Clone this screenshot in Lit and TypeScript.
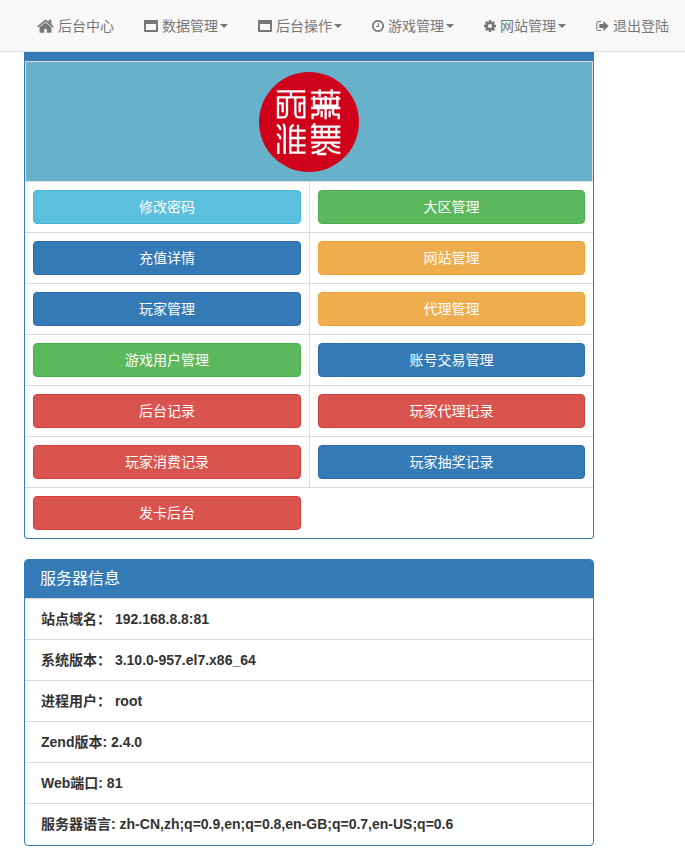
import { LitElement, html, css, svg } from "lit";
import { customElement } from "lit/decorators.js";

const icons: Record<string, { box: string; width: number; height: number; path: string }> = {
  home: {
    box: "64 96 1664 1536", width: 17, height: 16,
    path: "M1472 992v480q0 26-19 45t-45 19h-384v-384h-256v384h-384q-26 0-45-19t-19-45v-480q0-1 .5-3t.5-3l575-474 575 474q1 2 1 6zm223-69l-62 74q-8 9-21 11h-3q-13 0-21-7l-692-577-692 577q-12 8-24 7-13-2-21-11l-62-74q-8-10-7-23.5t11-21.5l719-599q32-26 76-26t76 26l244 204v-195q0-14 9-23t23-9h192q14 0 23 9t9 23v408l219 182q10 8 11 21.5t-7 23.5z",
  },
  window: {
    box: "0 0 14 14", width: 14, height: 14,
    path: "M1 1H13Q14 1 14 2V12Q14 13 13 13H1Q0 13 0 12V2Q0 1 1 1ZM2 5V11H12V5Z",
  },
  clock: {
    box: "128 0 1536 1792", width: 12, height: 14,
    path: "M1024 544v448q0 14-9 23t-23 9h-320q-14 0-23-9t-9-23v-64q0-14 9-23t23-9h224v-352q0-14 9-23t23-9h64q14 0 23 9t9 23zm416 352q0-148-73-273t-198-198-273-73-273 73-198 198-73 273 73 273 198 198 273 73 273-73 198-198 73-273zm224 0q0 209-103 385.5t-279.5 279.5-385.5 103-385.5-103-279.5-279.5-103-385.5 103-385.5 279.5-279.5 385.5-103 385.5 103 279.5 279.5 103 385.5z",
  },
  gear: {
    box: "128 0 1536 1792", width: 12, height: 14,
    path: "M1152 896q0-106-75-181t-181-75-181 75-75 181 75 181 181 75 181-75 75-181zm512-109v222q0 12-8 23t-20 13l-185 28q-19 54-39 91 35 50 107 138 10 12 10 25t-9 23q-27 37-99 108t-94 71q-12 0-26-9l-138-108q-44 23-91 38-16 136-29 186-7 28-36 28h-222q-14 0-24.5-8.5t-11.5-21.5l-28-184q-49-16-90-37l-141 107q-10 9-25 9-14 0-25-11-126-114-165-168-7-10-7-23 0-12 8-23 15-21 51-66.5t54-70.5q-27-50-41-99l-183-27q-13-2-21-12.5t-8-23.5v-222q0-12 8-23t19-13l186-28q14-46 39-92-40-57-107-138-10-12-10-24 0-10 9-23 26-36 98.5-107.5t94.5-71.5q13 0 26 10l138 107q44-23 91-38 16-136 29-186 7-28 36-28h222q14 0 24.5 8.5t11.5 21.5l28 184q49 16 90 37l142-107q9-9 24-9 13 0 25 10 129 119 165 170 7 8 7 22 0 12-8 23-15 21-51 66.5t-54 70.5q26 50 41 98l183 28q13 2 21 12.5t8 23.5z",
  },
  exit: {
    box: "64 0 1600 1792", width: 13, height: 14,
    path: "M704 1440q0 4 1 20t.5 26.5-3 23.5-10 19.5-20.5 6.5h-320q-119 0-203.5-84.5t-84.5-203.5v-704q0-119 84.5-203.5t203.5-84.5h320q13 0 22.5 9.5t9.5 22.5q0 4 1 20t.5 26.5-3 23.5-10 19.5-20.5 6.5h-320q-66 0-113 47t-47 113v704q0 66 47 113t113 47h312l11.5 1 11.5 3 8 5.5 7 9 2 13.5zm928-544q0 26-19 45l-544 544q-19 19-45 19t-45-19-19-45v-288h-448q-26 0-45-19t-19-45v-384q0-26 19-45t45-19h448v-288q0-26 19-45t45-19 45 19l544 544q19 19 19 45z",
  },
};

const menu = [
  { icon: "home", label: "后台中心", caret: false },
  { icon: "window", label: "数据管理", caret: true },
  { icon: "window", label: "后台操作", caret: true },
  { icon: "clock", label: "游戏管理", caret: true },
  { icon: "gear", label: "网站管理", caret: true },
  { icon: "exit", label: "退出登陆", caret: false },
];

const actions = [
  ["修改密码", "info"], ["大区管理", "success"],
  ["充值详情", "primary"], ["网站管理", "warning"],
  ["玩家管理", "primary"], ["代理管理", "warning"],
  ["游戏用户管理", "success"], ["账号交易管理", "primary"],
  ["后台记录", "danger"], ["玩家代理记录", "danger"],
  ["玩家消费记录", "danger"], ["玩家抽奖记录", "primary"],
  ["发卡后台", "danger"],
];

const server = [
  "站点域名： 192.168.8.8:81",
  "系统版本： 3.10.0-957.el7.x86_64",
  "进程用户： root",
  "Zend版本: 2.4.0",
  "Web端口: 81",
  "服务器语言: zh-CN,zh;q=0.9,en;q=0.8,en-GB;q=0.7,en-US;q=0.6",
];

// Seal emblem: four carved blocks on a red disc
const seal = svg`
  <circle cx="150" cy="150" r="150" fill="#d0021b"/>
  <g fill="none" stroke="#fff" stroke-width="7">
    <path d="M54 58H139M96 58V76M57 93V76H136V93M84 76V122Q84 136 72 136H57V94H71V121M109 76V122Q109 136 121 136H136V94H122V121"/>
    <path d="M156 62H244M182 52V74M218 52V74M156 80H244M165 72V101H235V72M186 80V101M214 80V101M200 72V142M156 108H244M178 108V122Q178 128 168 128H161V142M222 108V122Q222 128 232 128H239V142M188 116V136M212 116V136"/>
    <path d="M54 158Q64 164 64 174M54 186Q64 190 64 202M58 246V212M77 246V168Q77 160 72 156M94 246V172Q94 164 104 158M94 176H140M94 198H140M94 220H140M94 242H140M117 158V242"/>
    <path d="M166 154Q166 164 156 166M162 164H244M156 180H244M156 196H244M168 164V196M188 164V196M210 164V196M232 164V196M156 212H244M182 212Q182 224 158 226M200 212V224Q188 240 158 243M216 212Q220 224 242 226M178 232V246H202M206 226Q218 242 244 243"/>
  </g>`;

@customElement("app-root")
export class AppRoot extends LitElement {
  static styles = css`
    :host {
      display: block;
      font: 14px/20px "Liberation Sans", "Noto Sans CJK SC", sans-serif;
      color: #333;
      background: #fff;
    }
    * { box-sizing: border-box; }
    .nav {
      display: flex;
      justify-content: flex-end;
      height: 52px;
      padding-right: 1px;
      background: #f8f8f8;
      border-bottom: 1px solid #e0e0e0;
    }
    .nav a {
      display: flex;
      align-items: center;
      gap: 4px;
      padding: 0 15px;
      color: #777;
      text-decoration: none;
      white-space: nowrap;
    }
    .nav svg { display: block; fill: currentColor; fill-rule: evenodd; }
    .label { display: flex; align-items: center; gap: 2px; }
    .caret {
      border-top: 4px solid;
      border-left: 4px solid transparent;
      border-right: 4px solid transparent;
    }
    main {
      margin: 0 91px 0 24px;
      display: grid;
      gap: 20px;
      padding-bottom: 18px;
    }
    .panel {
      border: 1px solid #337ab7;
      border-radius: 4px;
      overflow: hidden;
    }
    .tools {
      border-top: 9px solid #337ab7;
      border-top-left-radius: 0;
      border-top-right-radius: 0;
    }
    .banner {
      display: flex;
      justify-content: center;
      padding: 10px 0 9px;
      background: #67b1ca;
      border: 1px solid #ddd;
      border-bottom: 0;
    }
    .banner svg { display: block; }
    .grid { display: grid; grid-template-columns: 1fr 1fr; }
    .cell { padding: 8px; border-top: 1px solid #ddd; }
    .cell:nth-child(even) { border-left: 1px solid #ddd; }
    .cell:last-child { grid-column: 1 / -1; }
    .cell:last-child button { width: calc(50% - 8px); }
    button {
      display: block;
      width: 100%;
      height: 34px;
      padding: 0 12px;
      border: 1px solid;
      border-radius: 4px;
      font: inherit;
      color: #fff;
    }
    .info { background: #5bc0de; border-color: #46b8da; }
    .success { background: #5cb85c; border-color: #4cae4c; }
    .primary { background: #337ab7; border-color: #2e6da4; }
    .warning { background: #f0ad4e; border-color: #eea236; }
    .danger { background: #d9534f; border-color: #d43f3a; }
    h3 {
      margin: 0;
      padding: 10px 15px;
      font-size: 16px;
      line-height: 18px;
      font-weight: 400;
      color: #fff;
      background: #337ab7;
    }
    ul { margin: 0; padding: 0 0 1px; list-style: none; font-weight: 700; }
    li { padding: 10px 16px; border-top: 1px solid #ddd; }
  `;

  render() {
    return html`
      <nav class="nav">
        ${menu.map((m) => {
          const i = icons[m.icon];
          return html`<a href="#">
            <svg width=${i.width} height=${i.height} viewBox=${i.box} aria-hidden="true"><path d=${i.path}></path></svg>
            <span class="label">${m.label}${m.caret ? html`<span class="caret"></span>` : ""}</span>
          </a>`;
        })}
      </nav>
      <main>
        <section class="panel tools">
          <div class="banner">
            <svg width="100" height="100" viewBox="0 0 300 300" aria-hidden="true">${seal}</svg>
          </div>
          <div class="grid">
            ${actions.map(([t, kind]) => html`<div class="cell"><button type="button" class=${kind}>${t}</button></div>`)}
          </div>
        </section>
        <section class="panel">
          <h3>服务器信息</h3>
          <ul>${server.map((s) => html`<li>${s}</li>`)}</ul>
        </section>
      </main>`;
  }
}
